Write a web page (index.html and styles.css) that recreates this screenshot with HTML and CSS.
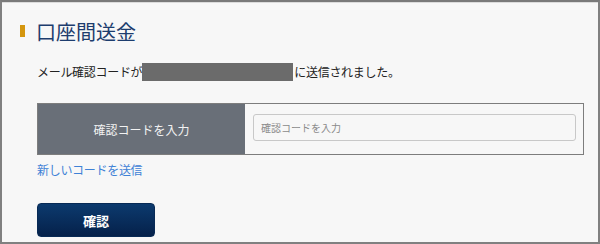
FILE: index.html
```html
<!DOCTYPE html>
<html lang="ja">
<head>
  <meta charset="UTF-8" />
  <meta name="viewport" content="width=device-width, initial-scale=1.0" />
  <title>口座間送金</title>
  <link rel="stylesheet" href="styles.css">
</head>
<body>
  <div class="frame">
    <h1 class="title">口座間送金</h1>
    <p class="notice">メール確認コードが<span class="masked"></span>に送信されました。</p>
    <div class="code-table">
      <div class="code-label">確認コードを入力</div>
      <div class="code-field">
        <input type="text" placeholder="確認コードを入力">
      </div>
    </div>
    <a href="#" class="resend">新しいコードを送信</a>
    <button class="confirm-btn">確認</button>
  </div>
</body>
</html>
```

FILE: styles.css
```css
/* Colores */
:root {
  --fondo: #f7f7f7;
  --marco: #808080;
  --titulo: #1d3d6e;
  --acento: #d4960f;
  --celda: #696f78;
  --enlace: #3f82d6;
}

* {
  box-sizing: border-box;
}

body {
  margin: 0;
  background: var(--fondo);
  font-family: "Noto Sans CJK JP", "Noto Sans", sans-serif;
  color: #222;
}

.frame {
  width: 600px;
  height: 244px;
  border: 2px solid var(--marco);
  border-top-color: #7a7a7a;
  box-shadow: inset 0 1px 0 #dcdcdc;
  padding: 0 0 0 35px;
  background: var(--fondo);
}

.title {
  position: relative;
  margin: 16px 0 0 -1px;
  font-size: 20px;
  font-weight: normal;
  line-height: 28px;
  color: var(--titulo);
}

.title::before {
  content: "";
  position: absolute;
  left: -16px;
  top: 7px;
  width: 5px;
  height: 12px;
  background: var(--acento);
}

.notice {
  margin: 17px 0 0;
  font-size: 12px;
  line-height: 18px;
  letter-spacing: -0.3px;
  display: flex;
  align-items: center;
}

.masked {
  display: inline-block;
  width: 151px;
  height: 18px;
  background: #6b6b6b;
  margin: 0 1px 0 0;
}

.code-table {
  display: flex;
  width: 547px;
  height: 52px;
  margin-top: 22px;
  border: 1px solid #7d7d7d;
}

.code-label {
  width: 207px;
  background: var(--celda);
  color: #f2f2f2;
  font-size: 12px;
  display: flex;
  align-items: center;
  justify-content: center;
}

.code-field {
  flex: 1;
  padding: 9px 7px 0 8px;
}

.code-field input {
  width: 100%;
  height: 27px;
  border: 1px solid #c8c8c8;
  border-radius: 3px;
  background: var(--fondo);
  padding: 0 7px;
  font-family: inherit;
  font-size: 10px;
}

.code-field input::placeholder {
  color: #8a8a8a;
}

.resend {
  display: block;
  margin-top: 6px;
  font-size: 12px;
  line-height: 18px;
  letter-spacing: -0.3px;
  color: var(--enlace);
  text-decoration: none;
}

.confirm-btn {
  display: block;
  margin-top: 24px;
  width: 118px;
  height: 34px;
  border: 1px solid #082a55;
  border-radius: 4px;
  background: linear-gradient(#0c3a6e, #05214a);
  color: #fff;
  font-family: inherit;
  font-size: 13px;
  font-weight: bold;
  cursor: pointer;
}
```
